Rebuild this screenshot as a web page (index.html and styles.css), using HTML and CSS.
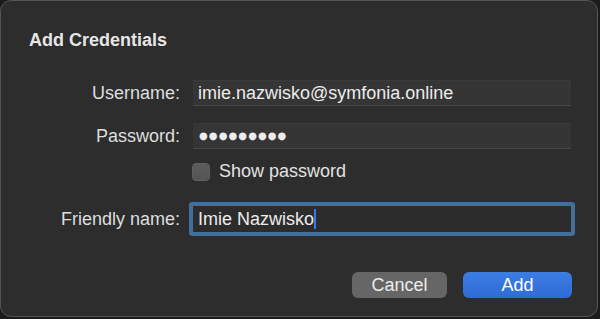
FILE: index.html
```html
<!DOCTYPE html>
<html lang="en">
<head>
  <meta charset="UTF-8" />
  <title>Add Credentials</title>
  <link rel="stylesheet" href="styles.css">
</head>
<body>
  <div class="window">
    <h1 class="title">Add Credentials</h1>

    <form class="form" autocomplete="off">
      <div class="row">
        <label class="label">Username:</label>
        <div class="field">imie.nazwisko@symfonia.online</div>
      </div>
      <div class="row row-password">
        <label class="label">Password:</label>
        <div class="field dots">●●●●●●●●●</div>
      </div>
      <div class="row row-check">
        <span class="label"></span>
        <label class="check"><span class="box"></span>Show password</label>
      </div>
      <div class="row row-friendly">
        <label class="label">Friendly name:</label>
        <div class="field focused">Imie Nazwisko<span class="caret"></span></div>
      </div>

      <div class="actions">
        <button type="button" class="btn btn-cancel">Cancel</button>
        <button type="button" class="btn btn-add">Add</button>
      </div>
    </form>
  </div>
</body>
</html>
```

FILE: styles.css
```css
* { box-sizing: border-box; }
body {
  margin: 0;
  padding: 0;
  background-color: #1b1b1b;
  font-family: 'Liberation Sans', Arial, sans-serif;
  color: #e2e2e2;
}
.window {
  width: 598px;
  height: 317px;
  background: #2d2d2d;
  border: 1px solid #555;
  border-radius: 11px;
  padding: 27px 27px 0 28px;
}
.title {
  margin: 0;
  font-size: 18px;
  font-weight: bold;
  line-height: 24px;
  color: #e6e6e6;
}
.form {
  margin-top: 28px;
}
.row {
  display: grid;
  grid-template-columns: 151px 378px;
  column-gap: 13px;
  align-items: center;
}
.row-password { margin-top: 17px; }
.row-check { margin-top: 12px; }
.row-friendly { margin-top: 24px; }
.label {
  text-align: right;
  font-size: 18px;
  color: #dedede;
}
.field {
  height: 26px;
  background: #353535;
  border-top: 1px solid #3a3a3a;
  border-bottom: 1px solid #474747;
  padding: 0 5px;
  font-size: 18px;
  line-height: 24px;
  color: #ececec;
  white-space: nowrap;
}
.dots {
  font-family: 'DejaVu Sans', sans-serif;
  font-size: 10px;
  letter-spacing: 1.1px;
  padding-left: 6px;
}
.focused {
  background: #2c2c2c;
  border-radius: 1px;
  box-shadow: 0 0 0 4px #41709f;
  border-color: #2c2c2c;
}
.caret {
  display: inline-block;
  width: 2px;
  height: 20px;
  background: #2f7cf6;
  vertical-align: -4px;
}
.check {
  display: flex;
  align-items: center;
  gap: 9px;
  font-size: 18px;
  color: #e2e2e2;
  margin-left: -1px;
}
.box {
  width: 18px;
  height: 18px;
  border-radius: 4px;
  background: linear-gradient(#5c5c5c, #555);
  border: 1px solid #606060;
}
.actions {
  display: flex;
  justify-content: flex-end;
  gap: 16px;
  margin-top: 40px;
  margin-right: -2px;
}
.btn {
  height: 26px;
  border: none;
  border-radius: 6px;
  font-family: 'Liberation Sans', Arial, sans-serif;
  font-size: 18px;
  color: #ececec;
  padding: 0;
}
.btn-cancel {
  width: 95px;
  background: #666;
}
.btn-add {
  width: 109px;
  background: linear-gradient(#3b7de3, #2f6bd5);
  color: #fff;
}
```
